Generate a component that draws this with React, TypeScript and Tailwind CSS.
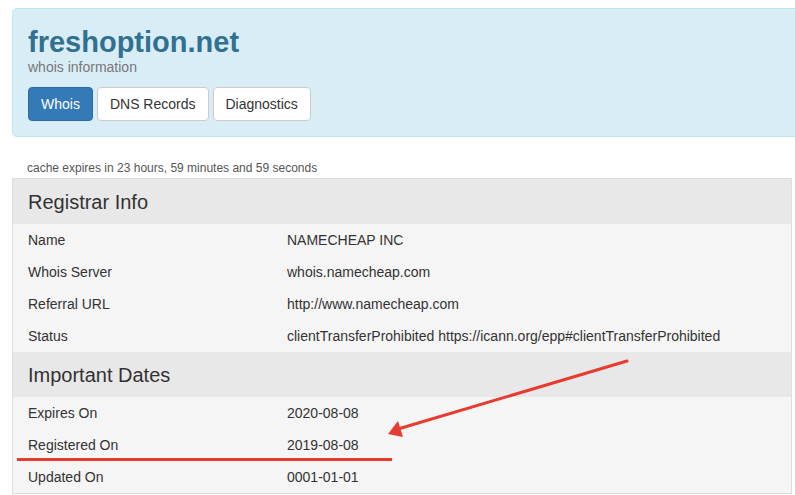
const registrar = [
  { label: "Name", value: "NAMECHEAP INC" },
  { label: "Whois Server", value: "whois.namecheap.com" },
  { label: "Referral URL", value: "http://www.namecheap.com" },
  {
    label: "Status",
    value:
      "clientTransferProhibited https://icann.org/epp#clientTransferProhibited",
  },
]

const dates = [
  { label: "Expires On", value: "2020-08-08" },
  { label: "Registered On", value: "2019-08-08" },
  { label: "Updated On", value: "0001-01-01" },
]

const Section = ({
  title,
  rows,
}: {
  title: string
  rows: { label: string; value: string }[]
}) => (
  <>
    <div className="h-[45px] bg-[#e7e8e7] pl-[15px] flex items-center text-[20px] text-[#333]">
      {title}
    </div>
    {rows.map((r) => (
      <div key={r.label} className="flex h-[32px] items-center text-[14px] text-[#333]">
        <div className="w-[274px] pl-[15px]">{r.label}</div>
        <div>{r.value}</div>
      </div>
    ))}
  </>
)

export default function App() {
  return (
    <div className="relative w-[795px] h-[495px] overflow-hidden bg-white font-['Liberation_Sans',Arial,sans-serif]">
      <div className="pl-[12px] pt-[8px]">
        <div className="-mr-4 h-[129px] rounded-l-[5px] border border-[#bce8f1] bg-[#d9edf7] pl-[15px] pt-[15px]">
          <h1 className="text-[29px] font-bold leading-[36px] text-[#31708f]">
            freshoption.net
          </h1>
          <div className="text-[14px] leading-[16px] text-[#777] -mt-[1px]">
            whois information
          </div>
          <div className="mt-[12px] flex gap-[4px] text-[14px]">
            <button className="h-[34px] rounded-[4px] border border-[#2e6da4] bg-[#337ab7] px-[12px] text-white">
              Whois
            </button>
            <button className="h-[34px] rounded-[4px] border border-[#ccc] bg-white px-[12px] text-[#333]">
              DNS Records
            </button>
            <button className="h-[34px] rounded-[4px] border border-[#ccc] bg-white px-[12px] text-[#333]">
              Diagnostics
            </button>
          </div>
        </div>
        <div className="mt-[24px] pl-[15px] text-[12px] leading-[14px] text-[#555]">
          cache expires in 23 hours, 59 minutes and 59 seconds
        </div>
        <div className="mt-[3px] mr-[3px] border border-[#ddd] bg-[#f5f5f5]">
          <Section title="Registrar Info" rows={registrar} />
          <Section title="Important Dates" rows={dates} />
        </div>
      </div>

      <svg className="pointer-events-none absolute inset-0" width="795" height="495">
        <line x1="627" y1="361" x2="398" y2="429" stroke="#e63b2e" strokeWidth="3" strokeLinecap="round" />
        <polygon points="388,434 398,421 403,437" fill="#e63b2e" />
        <line x1="17" y1="459.5" x2="392" y2="459.5" stroke="#e63b2e" strokeWidth="3" />
      </svg>
    </div>
  )
}
